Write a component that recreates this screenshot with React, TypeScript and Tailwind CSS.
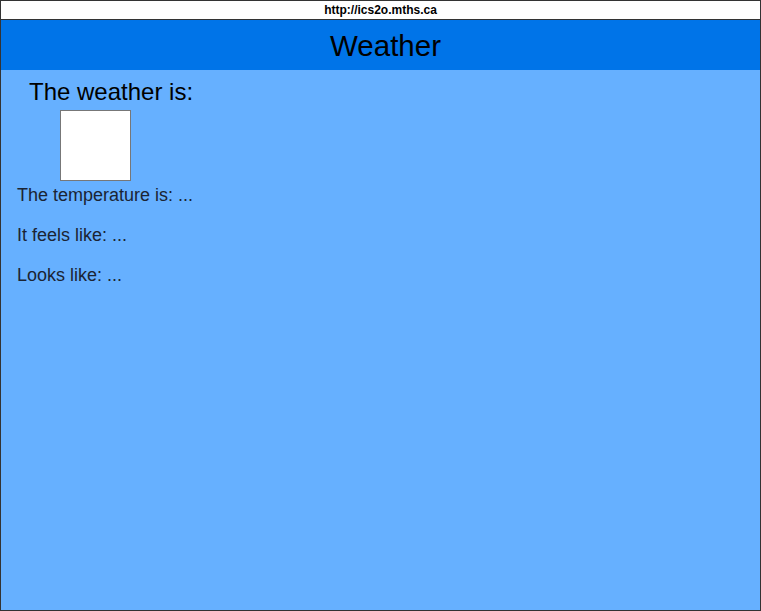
export default function App() {
  return (
    <div className="w-[761px] h-[611px] border border-[#333] bg-[#66b0ff] flex flex-col font-['Liberation_Sans',Arial,sans-serif] overflow-hidden">
      <div className="h-[19px] bg-white border-b border-[#333] flex items-center justify-center text-[12px] font-bold text-black leading-none">
        http://ics2o.mths.ca
      </div>
      <header className="h-[50px] pt-[3px] pl-[10px] bg-[#0074e8] flex items-center justify-center text-[29.5px] text-black">
        Weather
      </header>
      <main className="px-4 text-[#1b2433]">
        <h2 className="ml-3 mt-[8px] text-[24px] leading-[28px] text-black">The weather is:</h2>
        <div className="ml-[43px] mt-[4px] w-[71px] h-[71px] bg-white border border-[#777]" />
        <p className="text-[18px] leading-[28px]">The temperature is: ...</p>
        <p className="mt-3 text-[18px] leading-[28px]">It feels like: ...</p>
        <p className="mt-3 text-[18px] leading-[28px]">Looks like: ...</p>
      </main>
    </div>
  );
}
